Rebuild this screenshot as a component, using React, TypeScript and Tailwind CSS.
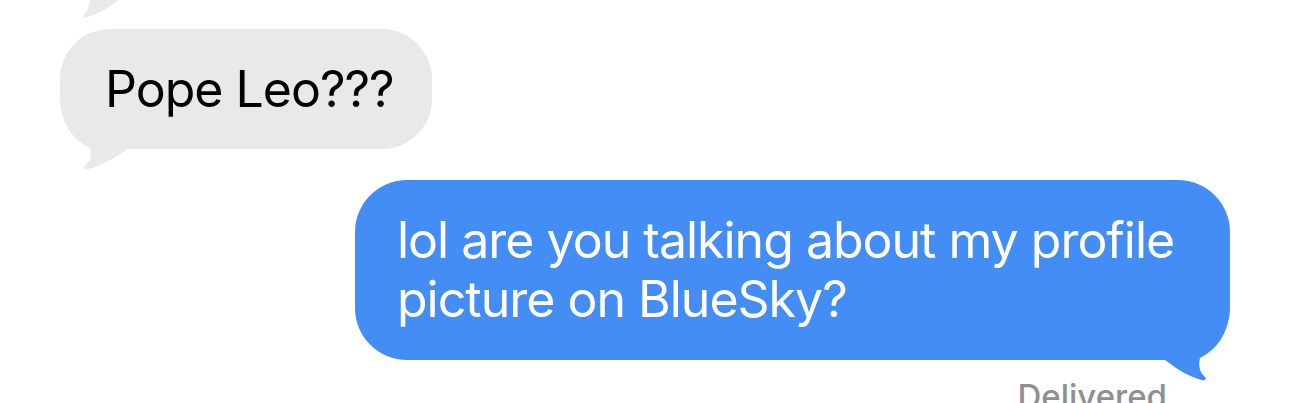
export default function App() {
  return (
    <div
      className="h-[403px] w-[1290px] overflow-hidden bg-white flex flex-col"
      style={{ fontFamily: 'Inter, "Noto Sans", sans-serif' }}
    >
      {/* tail of the previous incoming bubble, cut by the top edge */}
      <svg width="140" height="18" viewBox="0 0 140 18" className="block shrink-0">
        <path
          d="M 90 -5 C 90 5, 88 11, 84 15 C 82 17, 84 18, 87 17 C 100 13, 112 7, 124 -5 Z"
          fill="#e9e9eb"
        />
      </svg>

      <div className="relative ml-[60px] mt-[11px] w-[372px] rounded-[50px] bg-[#e9e9eb] pl-[45px] pt-[31px] pb-[30px]">
        <p className="relative z-10 text-[50px] leading-[59px] tracking-[-1px] text-black">Pope Leo???</p>
        <svg
          width="80"
          height="60"
          viewBox="0 0 80 60"
          className="absolute left-0 bottom-0 overflow-visible"
        >
          <path
            d="M 2 21 C 4 41, 18 53, 30 59 C 32 66, 30 73, 25 77 C 23 79, 25 81, 28 80 C 40 77, 55 69, 66 61 L 66 41 Z"
            fill="#e9e9eb"
          />
        </svg>
      </div>

      <div className="relative ml-[355px] mt-[31px] w-[875px] rounded-[52px] bg-[#448df4] pl-[42px] pt-[31px] pb-[31px]">
        <p className="relative z-10 text-[50px] leading-[59px] tracking-[-1px] text-white">
          lol are you talking about my profile
          <br />
          picture on BlueSky?
        </p>
        <svg
          width="80"
          height="60"
          viewBox="0 0 80 60"
          className="absolute right-0 bottom-0 overflow-visible"
        >
          <path
            d="M 78 20 C 75 40, 62 52, 50 58 C 48 66, 50 73, 55 77 C 57 79, 55 81, 52 80 C 40 77, 28 70, 15 60 L 15 40 Z"
            fill="#448df4"
          />
        </svg>
      </div>

      <p className="mt-[18px] mr-[123px] self-end text-[33px] font-medium leading-[36px] text-[#8e8e93]">
        Delivered
      </p>
    </div>
  );
}
